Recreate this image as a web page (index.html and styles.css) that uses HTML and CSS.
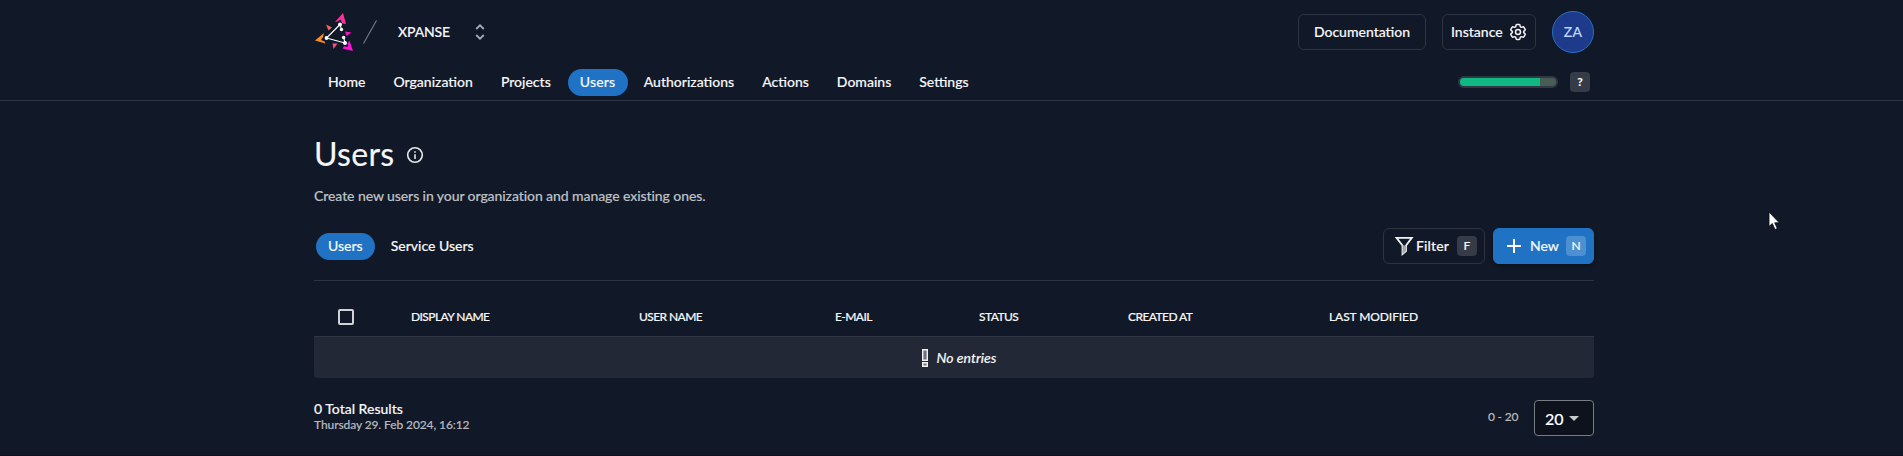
FILE: index.html
```html
<!DOCTYPE html>
<html lang="en">
<head>
<meta charset="utf-8">
<title>Users</title>
<link rel="stylesheet" href="styles.css">
</head>
<body>
<header class="header">
  <div class="container topbar">
    <svg class="logo" width="40" height="42" viewBox="0 0 40 42">
      <path fill="#fb8c23" d="M1 30.500 10 23 9 27 7 30 10.500 31.500 11.500 33.500z"/>
      <path fill="#f8319d" d="M29 3 32 14 28.500 13.500 26.500 9.500 23.500 11.500 21 12z"/>
      <path fill="#fb12d5" d="M39 41 28.500 38.500 30 36.200 34.200 37 33.500 33.500 35.500 30.800z"/>
      <path fill="#f6655a" d="M12 14.500 18 17.500 14.500 20.500z"/>
      <path fill="#f4527b" d="M18.500 33.500H23.500L19.500 39z"/>
      <path fill="#f815c7" d="M31 21.500 37.500 22.500 32.500 26z"/>
      <path d="M26 14.500 12.500 28 31 33 29.700 27.500M26 14.500 27.500 19.500" fill="none" stroke="#fff" stroke-width="1.100"/>
      <g fill="#fff"><circle cx="26" cy="14.500" r="2"/><circle cx="12.500" cy="28" r="1.900"/><circle cx="31" cy="33" r="2"/><circle cx="29.600" cy="27.500" r="1.700"/><circle cx="27.500" cy="19.500" r="1.700"/></g>
    </svg>
    <svg class="slash" width="16" height="26" viewBox="0 0 16 26"><path d="M1.500 24.500 14.500 1.500" stroke="#72767f" stroke-width="1.200"/></svg>
    <span class="org">XPANSE</span>
    <svg width="12" height="18" viewBox="0 0 12 18"><path d="M2.200 6 6 2.300 9.800 6M2.200 12 6 15.700 9.800 12" fill="none" stroke="#a6aab2" stroke-width="1.800"/></svg>
    <div class="actions">
      <button class="btn docs">Documentation</button>
      <button class="btn instance">Instance <svg width="20" height="20" viewBox="0 0 24 24" fill="none" stroke="#f1f2f3" stroke-width="1.800" stroke-linejoin="round"><path d="M9.594 3.940c.09-.542.56-.94 1.110-.94h2.593c.55 0 1.020.398 1.110.94l.213 1.281c.063.374.313.686.645.870.074.04.147.083.220.127.324.196.720.257 1.075.124l1.217-.456a1.125 1.125 0 011.370.490l1.296 2.247a1.125 1.125 0 01-.260 1.431l-1.003.827c-.293.240-.438.613-.431.992a6.759 6.759 0 010 .255c-.007.378.138.750.430.990l1.005.828c.424.350.534.954.260 1.430l-1.298 2.247a1.125 1.125 0 01-1.369.491l-1.217-.456c-.355-.133-.750-.072-1.076.124a6.570 6.570 0 01-.220.128c-.331.183-.581.495-.644.869l-.213 1.280c-.090.543-.560.941-1.110.941h-2.594c-.550 0-1.020-.398-1.110-.940l-.213-1.281c-.062-.374-.312-.686-.644-.870a6.520 6.520 0 01-.220-.127c-.325-.196-.720-.257-1.076-.124l-1.217.456a1.125 1.125 0 01-1.369-.490l-1.297-2.247a1.125 1.125 0 01.260-1.431l1.004-.827c.292-.240.437-.613.430-.992a6.932 6.932 0 010-.255c.007-.378-.138-.750-.430-.990l-1.004-.828a1.125 1.125 0 01-.260-1.430l1.297-2.247a1.125 1.125 0 011.370-.491l1.216.456c.356.133.751.072 1.076-.124.072-.044.146-.087.220-.128.332-.183.582-.495.644-.869l.214-1.281z"/><circle cx="12" cy="12" r="3"/></svg></button>
      <div class="avatar">ZA</div>
    </div>
  </div>
  <div class="container navrow">
    <nav class="nav main-nav">
      <a class="tab">Home</a><a class="tab">Organization</a><a class="tab">Projects</a><a class="tab active">Users</a><a class="tab">Authorizations</a><a class="tab">Actions</a><a class="tab">Domains</a><a class="tab">Settings</a>
    </nav>
    <div class="progress"><div class="bar"></div></div>
    <span class="kbd help">?</span>
  </div>
</header>
<main class="container">
  <div class="heading">
    <h1>Users</h1>
    <svg width="18" height="18" viewBox="0 0 18 18" fill="none" stroke="#e7e8ea" stroke-width="1.600"><circle cx="9" cy="9" r="7.300"/><path d="M9 8.200V13M9 5.200V6.800"/></svg>
  </div>
  <p class="desc">Create new users in your organization and manage existing ones.</p>
  <div class="toolbar">
    <div class="nav"><a class="tab active">Users</a><a class="tab">Service Users</a></div>
    <div class="tools">
      <button class="btn filter"><svg width="20" height="20" viewBox="0 0 20 20"><path d="M2.500 1.900H17.800L12 9.500V15L8.500 18V9.500z" fill="none" stroke="#f1f2f3" stroke-width="1.800"/><path d="M8.500 9.500H12V15L8.500 18z" fill="#a4a7ad"/></svg><span class="label">Filter</span><span class="kbd">F</span></button>
      <button class="btn new"><svg width="16" height="16" viewBox="0 0 16 16"><path d="M8 1V15M1 8H15" stroke="#fff" stroke-width="2"/></svg><span class="label">New</span><span class="kbd">N</span></button>
    </div>
  </div>
  <div class="thead">
    <span class="check"></span><span>DISPLAY NAME</span><span>USER NAME</span><span>E-MAIL</span><span>STATUS</span><span>CREATED AT</span><span class="modified">LAST MODIFIED</span>
  </div>
  <div class="empty">
    <svg width="6" height="18" viewBox="0 0 6 18" fill="#6d727c" stroke="#f2f2f3" stroke-width="1.400"><path d="M.7.700H5.300V11.300H.7zM.7 13.700H5.300V17.300H.7z"/></svg>
    <i>No entries</i>
  </div>
  <footer class="footer">
    <div class="totals"><div class="count">0 Total Results</div><div class="date">Thursday 29. Feb 2024, 16:12</div></div>
    <span class="range">0 - 20</span>
    <div class="select"><span>20</span><svg width="10" height="5" viewBox="0 0 10 5"><path d="M0 0H10L5 5z" fill="#c7c9cc"/></svg></div>
  </footer>
</main>
<svg class="cursor" width="14" height="20" viewBox="0 0 14 20"><path d="M1 1V15.500L4.300 12.500 7 18.500 9.300 17.500 6.700 11.800H11.300z" fill="#fff" stroke="#080a10" stroke-width=".8"/></svg>
</body>
</html>
```
FILE: styles.css
```css
* { box-sizing: border-box; }
body {
  margin: 0;
  height: 456px;
  overflow: hidden;
  background: #111827;
  border-bottom: 1px solid #120d20;
  color: #f6f7f8;
  font: 500 14px/20px Lato, sans-serif;
  -webkit-text-stroke: .15px;
}
.container { width: 1280px; margin-left: 314px; }
.header { height: 101px; border-bottom: 1px solid #2e3543; }
.topbar { display: flex; align-items: center; height: 64px; }
.logo { margin-bottom: 2px; }
.slash { margin-left: 8px; }
.org { width: 76px; margin-left: 20px; letter-spacing: -.15px; }
.actions { display: flex; align-items: center; gap: 16px; margin-left: auto; }
.btn {
  display: flex;
  align-items: center;
  height: 36px;
  padding: 0;
  border: 1px solid #2d3340;
  border-radius: 6px;
  background: transparent;
  color: inherit;
  font: inherit;
}
.docs { width: 128px; justify-content: center; }
.instance { width: 94px; padding-left: 8px; gap: 5px; }
.avatar {
  display: flex;
  align-items: center;
  justify-content: center;
  width: 42px;
  height: 42px;
  border: 1.5px solid #2073c4;
  border-radius: 50%;
  background: #1e3a8a;
  color: #bfdbfe;
  letter-spacing: .3px;
}
.navrow { display: flex; align-items: center; height: 36px; }
.nav { display: flex; gap: 4px; padding-left: 2px; }
.tab { height: 27px; padding: 0 12px; border-radius: 14px; line-height: 26px; }
.active { background: #2073c4; }
.main-nav .active { width: 60px; margin-left: 1px; letter-spacing: .2px; }
.progress {
  width: 100px;
  height: 12px;
  margin: 0 12px 0 auto;
  padding: 2px;
  border-radius: 6px;
  background: #303746;
}
.bar {
  height: 8px;
  border-radius: 4px;
  background: linear-gradient(90deg, #10b981 80px, #475e56 80px);
}
.kbd {
  display: flex;
  align-items: center;
  justify-content: center;
  width: 20px;
  height: 20px;
  border-radius: 4px;
  background: #363b48;
  font-size: 12px;
}
.help { margin-right: 4px; font-weight: 700; }
.heading { display: flex; align-items: center; height: 40px; margin-top: 33px; gap: 12px; }
h1 { margin: 0; font-size: 32px; line-height: 40px; font-weight: 400; letter-spacing: .3px; }
.heading svg { margin-top: 1px; }
.desc { margin: 12px 0 0; color: #bec1c5; letter-spacing: -.08px; }
.toolbar {
  display: flex;
  align-items: flex-start;
  justify-content: space-between;
  height: 53px;
  margin-top: 22px;
  border-bottom: 1px solid #2e3543;
}
.toolbar .nav { margin-top: 5px; }
.tools { display: flex; gap: 8px; }
.filter { width: 102px; padding-left: 10px; }
.filter .label { margin-left: 2px; letter-spacing: .15px; }
.btn .kbd { margin-left: auto; margin-right: 7px; }
.new { width: 101px; padding-left: 12px; border-color: #2073c4; background: #2073c4; box-shadow: 0 2px 4px #0005; }
.new .label { margin-left: 8px; }
.new .kbd { background: #4d8fd0; }
.thead {
  display: grid;
  grid-template-columns: 73px 228px 196px 144px 149px 201px 1fr;
  align-items: center;
  height: 55px;
  padding: 24px 0 7px 24px;
  font-size: 12px;
  letter-spacing: -.58px;
}
.modified { letter-spacing: -.1px; }
.check { width: 16px; height: 16px; border: 2px solid #d1d3d6; border-radius: 2px; }
.empty {
  display: flex;
  align-items: center;
  justify-content: center;
  gap: 9px;
  height: 42px;
  padding: 1px 0 0 10px;
  border-top: 1px solid #2e3543;
  border-radius: 0 0 4px 4px;
  background: #222835;
}
.footer { display: flex; align-items: flex-start; margin-top: 22px; }
.totals { flex: 1; }
.count { line-height: 18px; }
.date { font-size: 12px; line-height: 14px; color: #b7babf; letter-spacing: -.1px; }
.range { width: 30px; margin: 7px 16px 0 0; font-size: 12px; white-space: nowrap; color: #b7babf; letter-spacing: -.2px; }
.select {
  display: flex;
  align-items: center;
  gap: 5px;
  width: 60px;
  height: 36px;
  padding-left: 10px;
  border: 1px solid #777b84;
  border-radius: 4px;
  background: #0d121d;
  color: #fff;
  font-size: 16px;
}
.select span { padding-top: 2px; }
.cursor { position: absolute; left: 1768px; top: 211px; }
```
